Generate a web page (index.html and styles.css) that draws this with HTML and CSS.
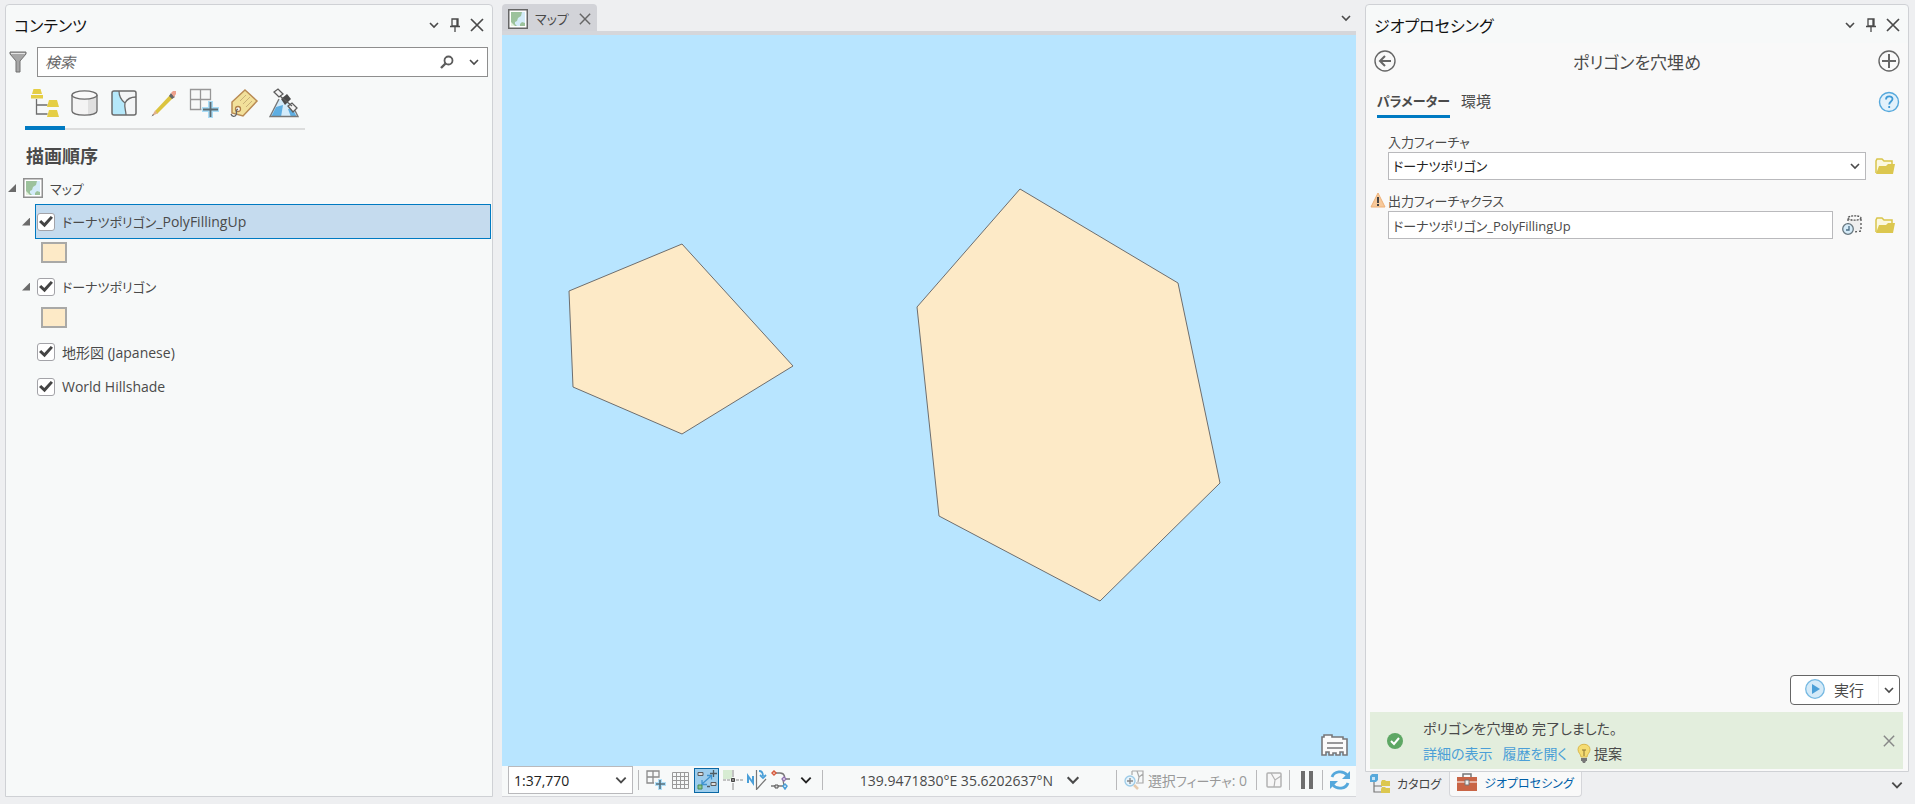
FILE: index.html
```html
<!DOCTYPE html>
<html lang="ja">

<head>
    <meta charset="UTF-8">
    <meta name="viewport" content="width=device-width, initial-scale=1.0">
    <title>マップ</title>
    <link rel="stylesheet" href="styles.css">
</head>

<body>
    <!-- shared icons -->
    <svg class="symbols" aria-hidden="true">
        <symbol id="chevron" viewBox="0 0 12 12">
            <path d="M2 4l4 4 4-4" fill="none" stroke="currentColor" stroke-width="1.600" />
        </symbol>
        <symbol id="pin" viewBox="0 0 12 14">
            <path d="M3 1h6v7H3zM1 8.500h10M6 8v6M8 1v7" fill="none" stroke="currentColor" stroke-width="1.300" />
        </symbol>
        <symbol id="close" viewBox="0 0 14 14">
            <path d="M1 1l12 12M13 1L1 13" fill="none" stroke="currentColor" stroke-width="1.700" />
        </symbol>
        <symbol id="map" viewBox="0 0 20 20">
            <path d="M.75.75h18.500v18.500H.75z" fill="#fff" stroke="currentColor" stroke-width="1.500" />
            <path d="M3 3h14v14H3z" fill="#d3ebf8" />
            <path d="M3 3h11l-1 4-3 2-1 3-2 1v2l2 2H3z" fill="#9cc29c" />
            <path d="M12 17v-2l2-2 3 1v3z" fill="#9cc29c" />
            <path d="M3 13l4 4H3z" fill="#e4f1dd" />
        </symbol>
        <symbol id="folder" viewBox="0 0 20 17">
            <path d="M1 15V3l1-2h5l2 2h8v3" fill="#fbf8e0" stroke="#d9c54b" stroke-width="1.500" />
            <path d="M4 8h7l2-2h7l-2 10H1z" fill="#dcc74f" />
        </symbol>
    </svg>

    <div class="app">
        <section class="panel contents">
            <header class="panel-header">
                <h2>コンテンツ</h2>
                <button aria-label="メニュー"><svg class="i12"><use href="#chevron" /></svg></button>
                <button aria-label="固定"><svg class="i14"><use href="#pin" /></svg></button>
                <button aria-label="閉じる"><svg class="i14"><use href="#close" /></svg></button>
            </header>

            <div class="search">
                <svg class="funnel" viewBox="0 0 18 22">
                    <path d="M1 1h16v2l-6 7v11H7V10L1 3z" fill="#a6a6a6" stroke="#707070" />
                    <path d="M2 2.500h14" stroke="#e4e4e4" />
                </svg>
                <div class="search-box">
                    <input type="text" placeholder="検索" aria-label="検索">
                    <button aria-label="検索する">
                        <svg class="i14" viewBox="0 0 14 14">
                            <circle cx="8.500" cy="5.500" r="4" fill="none" stroke="#5c5c5c" stroke-width="1.800" />
                            <path d="M5.500 8.500L1 13" stroke="#5c5c5c" stroke-width="2.400" />
                        </svg>
                    </button>
                    <button aria-label="検索オプション"><svg class="i12"><use href="#chevron" /></svg></button>
                </div>
            </div>

            <nav class="view-tabs">
                <button class="active" aria-label="描画順序">
                    <svg viewBox="0 0 30 30">
                        <path d="M7.500 11v15h11M7.500 17h11" fill="none" stroke="#6e6e6e" stroke-width="1.300" />
                        <path d="M4.500 1h7l1.500 5H3zM2 7h12v3.500H2z" fill="#e5ce45" />
                        <path d="M20 12h8l2 7H18zM20 22h8l2 7H18z" fill="#e5ce45" />
                    </svg>
                </button>
                <button aria-label="データ ソース">
                    <svg viewBox="0 0 30 30">
                        <path d="M3 7v16c0 5.500 25 5.500 25 0V7" fill="#f4f4f4" />
                        <path d="M19 11v16c5-.5 9-2 9-4V7c0 2-4 3.500-9 4z" fill="#e0e0e0" />
                        <path d="M3 7v16c0 5.500 25 5.500 25 0V7" fill="none" stroke="#6b6b6b" stroke-width="1.300" />
                        <ellipse cx="15.500" cy="7" rx="12.500" ry="4.200" fill="#f9f9f9" stroke="#6b6b6b" stroke-width="1.300" />
                    </svg>
                </button>
                <button aria-label="選択">
                    <svg viewBox="0 0 30 30">
                        <rect x="3" y="3" width="24" height="24" rx="2" fill="#f3f5f6" />
                        <path d="M10 3c0 6 2 9 6 12-1 4 1 8 1 12H5l-2-2V3z" fill="#b5e8fa" />
                        <path d="M10 3c0 6 2 9 6 12-1 4 1 8 1 12M16 15c2-4 6-6 11-6" fill="none" stroke="#6b6b6b" stroke-width="1.300" />
                        <rect x="3" y="3" width="24" height="24" rx="2" fill="none" stroke="#6b6b6b" stroke-width="1.500" />
                    </svg>
                </button>
                <button aria-label="編集">
                    <svg viewBox="0 0 30 30">
                        <path d="M6 23L21 7l3 3L8 26z" fill="#dcc43f" />
                        <path d="M6 22.500L3 28l5.500-2.500z" fill="#e0b08b" />
                        <path d="M4 26l-1.500 2.500L5 27z" fill="#666" />
                        <path d="M20 8l2-3 4 4-3 2z" fill="#686868" />
                        <path d="M22 5l2-2h3v3l-2 3z" fill="#eea08d" />
                    </svg>
                </button>
                <button aria-label="スナップ">
                    <svg viewBox="0 0 30 30">
                        <path d="M1.500 1.500h20v10h-20zM11.500 1.500v20M1.500 11.500v10h11" fill="none" stroke="#979797" stroke-width="1.300" />
                        <path d="M19 13h5v6h6v5h-6v6h-5v-6h-6v-5h6z" fill="#a9dcf6" />
                        <path d="M21.500 14v15M14 21.500h15" stroke="#5d6a70" stroke-width="1.800" />
                    </svg>
                </button>
                <button aria-label="ラベリング">
                    <svg viewBox="0 0 30 30">
                        <path d="M16 2l12 11-14 15-11-3V14z" fill="#f2e09a" stroke="#b98b54" stroke-width="1.500" />
                        <path d="M11 13l6-6M14 16l7-7M17 19l6-6" stroke="#c9b078" />
                        <circle cx="9" cy="21" r="2.500" fill="#fff" stroke="#b07f48" stroke-width="1.300" />
                        <path d="M9 21c-4 2 0 4-2 6-1 2-4 2-5-1" fill="none" stroke="#666" stroke-width="1.300" />
                    </svg>
                </button>
                <button aria-label="画像">
                    <svg viewBox="0 0 30 30">
                        <path d="M9 12L1 29h28l-5-10-8-7z" fill="#d3ebfa" />
                        <path d="M7 19l7-2-2 12H2z" fill="#5eaee2" />
                        <path d="M23 20l5 9h-6l-3-8z" fill="#5eaee2" />
                        <path d="M10 11L1 28.500h28l-3-6" fill="none" stroke="#777" stroke-width="1.400" />
                        <path d="M5 4l4-3 5 5-4 3zM19 18l4-3 5 5-4 4z" fill="#f4f4f4" stroke="#5c5c5c" stroke-width="1.300" />
                        <path d="M12 11l6-5 4 5-6 6z" fill="#4b4b4b" />
                        <path d="M11 8l12 10" stroke="#5c5c5c" stroke-width="1.300" />
                    </svg>
                </button>
            </nav>

            <h3>描画順序</h3>

            <ul class="tree">
                <li class="map-row">
                    <span class="expander"></span>
                    <svg class="i20"><use href="#map" /></svg>
                    <span class="kana">マップ</span>
                </li>
                <li class="layer">
                    <span class="expander"></span>
                    <label class="selected"><input type="checkbox" checked><span><span class="kana">ドーナツポリゴン</span>_PolyFillingUp</span></label>
                </li>
                <li class="symbol"><span class="swatch"></span></li>
                <li class="layer">
                    <span class="expander"></span>
                    <label><input type="checkbox" checked><span class="kana">ドーナツポリゴン</span></label>
                </li>
                <li class="symbol"><span class="swatch"></span></li>
                <li class="layer leaf">
                    <label><input type="checkbox" checked><span>地形図 (Japanese)</span></label>
                </li>
                <li class="layer leaf">
                    <label><input type="checkbox" checked><span>World Hillshade</span></label>
                </li>
            </ul>
        </section>

        <main class="map-view">
            <div class="map-tabs">
                <div class="map-tab">
                    <svg class="i20"><use href="#map" /></svg>
                    <span class="kana">マップ</span>
                    <button aria-label="閉じる"><svg class="i12"><use href="#close" /></svg></button>
                </div>
                <button aria-label="ビュー一覧"><svg class="i12"><use href="#chevron" /></svg></button>
            </div>

            <div class="canvas">
                <svg class="features" viewBox="0 0 854 731">
                    <polygon points="180,209 291,331 180,399 71,352 67,256" />
                    <polygon points="518,154 676,248 718,448 598,566 437,481 415,272" />
                </svg>
                <button class="reader" aria-label="マップの注記">
                    <svg viewBox="0 0 28 24">
                        <path d="M1 22V4h2V2h8v2h11v2h4v16h-4v-3h-3v3h-4v-2h-3v2H8v-3H5v3z" fill="#fafafa" stroke="#77777a" stroke-width="1.600" />
                        <path d="M6 10h16M6 15h16" stroke="#77777a" stroke-width="1.600" />
                    </svg>
                </button>
            </div>

            <footer class="status">
                <div class="combo scale">
                    <select aria-label="縮尺">
                        <option>1:37,770</option>
                    </select>
                    <svg class="i14"><use href="#chevron" /></svg>
                </div>
                <i class="sep"></i>
                <button aria-label="グリッドの追加">
                    <svg class="i20" viewBox="0 0 20 20">
                        <path d="M1 1h12v6H1zM7 1v12M1 7v6h7" fill="none" stroke="#8b8b8b" stroke-width="1.300" />
                        <path d="M12 9h4v3h4v4h-4v4h-4v-4H9v-4h3z" fill="#b0dff7" />
                        <path d="M14 10v9M10 14h9" stroke="#56707d" stroke-width="1.600" />
                    </svg>
                </button>
                <button aria-label="グリッド">
                    <svg class="i20" viewBox="0 0 20 20">
                        <path d="M2.500 2.500h16v16h-16zM6.500 2v16M10.500 2v16M14.500 2v16M2 6.500h16M2 10.500h16M2 14.500h16" fill="none" stroke="#9a9a9a" />
                    </svg>
                </button>
                <button class="active" aria-label="補正">
                    <svg class="i20" viewBox="0 0 20 20">
                        <path d="M5 14L14 6M10 5.500h4.500v4M5 10v4.500h5" fill="none" stroke="#3f93cf" stroke-width="1.300" />
                        <path d="M1 2.500h5v3H1zM14 12.500h5v3h-5z" fill="#ddd" stroke="#5b5b5b" />
                        <path d="M16.500 0v7M13 3.500h7M10 16.500h3" stroke="#4e5b63" stroke-width="1.300" />
                        <path d="M1 15h4v4H1z" fill="#8cc48c" stroke="#478b55" />
                    </svg>
                </button>
                <button aria-label="スナップ">
                    <svg class="i20" viewBox="0 0 20 20">
                        <path d="M0 0h9v9H0z" fill="#d7ecd3" />
                        <path d="M10 0v7M10 13v7" stroke="#8b8b8b" />
                        <path d="M0 10h7M13 10h7" stroke="#8b8b8b" stroke-dasharray="3 1" />
                        <path d="M8.500 8.500h3v3h-3z" fill="#888" stroke="#444" />
                    </svg>
                </button>
                <button aria-label="真北">
                    <svg class="i20" viewBox="0 0 20 20">
                        <path d="M1 13V6l5 7V6" fill="none" stroke="#4a9fd8" stroke-width="2" />
                        <path d="M9.500 0v20M10 19L19 9" stroke="#777" stroke-width="1.200" />
                        <path d="M12 1c3 0 4 2 4 5M13 5l3 3 3-3" fill="none" stroke="#4a9fd8" stroke-width="1.800" />
                    </svg>
                </button>
                <button aria-label="頂点">
                    <svg class="i20" viewBox="0 0 20 20">
                        <path d="M3 3h6c5 0 6 6 3 6h7M0 16h13l-1-6" fill="none" stroke="#777" stroke-width="1.300" />
                        <path d="M3 1l2 2-2 2-2-2z" fill="#fff" stroke="#d85b3e" stroke-width="1.500" />
                        <path d="M13 7l2 2-2 2-2-2z" fill="#fff" stroke="#9070b0" stroke-width="1.300" />
                        <path d="M14 14l2 2-2 3-2-3z" fill="#fff" stroke="#4a9fd8" stroke-width="1.500" />
                        <path d="M4 15h3v3H4z" fill="#ddd" stroke="#555" />
                    </svg>
                </button>
                <button class="dark" aria-label="その他"><svg class="i14"><use href="#chevron" /></svg></button>
                <i class="sep"></i>
                <button class="coords"><span>139.9471830°E 35.6202637°N</span><svg class="i16"><use href="#chevron" /></svg></button>
                <i class="sep"></i>
                <button class="selection" disabled>
                    <svg class="i20" viewBox="0 0 20 20">
                        <path d="M8 1h11v12h-7M8 1v4M13 1l2 6 4-3M15 7l-1 5" fill="none" stroke="#a8a8a8" stroke-width="1.200" />
                        <circle cx="6" cy="11" r="5" fill="#e5f3fb" stroke="#9ccbe8" stroke-width="1.300" />
                        <path d="M6 8v6M3 11h6" stroke="#888" stroke-width="1.300" />
                        <path d="M10 15l4 4" stroke="#e6cbae" stroke-width="2.500" />
                    </svg>
                    <span>選択<span class="kana">フィーチャ</span>: 0</span>
                </button>
                <i class="sep"></i>
                <button disabled aria-label="選択解除">
                    <svg class="i20" viewBox="0 0 20 20">
                        <rect x="3" y="3" width="14" height="14" rx="1" fill="#f7f7f7" stroke="#b2b2b2" stroke-width="1.500" />
                        <path d="M7 3l4 7 6-4M11 10l-1 7" fill="none" stroke="#b2b2b2" stroke-width="1.200" />
                    </svg>
                </button>
                <i class="sep"></i>
                <button aria-label="一時停止">
                    <svg class="i20" viewBox="0 0 20 20"><path d="M4 1h4v18H4zM12 1h4v18h-4z" fill="#6e6e6e" /></svg>
                </button>
                <i class="sep"></i>
                <button aria-label="更新">
                    <svg class="i20" viewBox="0 0 20 20">
                        <path d="M2 7c2-6 11-7 15-2M18 13c-2 6-11 7-15 2" fill="none" stroke="#55a8dc" stroke-width="2.800" />
                        <path d="M20 1v8h-8zM0 19v-8h8z" fill="#55a8dc" />
                    </svg>
                </button>
            </footer>
        </main>

        <div class="dock">
            <section class="panel tool">
                <header class="panel-header">
                    <h2>ジオプロセシング</h2>
                    <button aria-label="メニュー"><svg class="i12"><use href="#chevron" /></svg></button>
                    <button aria-label="固定"><svg class="i14"><use href="#pin" /></svg></button>
                    <button aria-label="閉じる"><svg class="i14"><use href="#close" /></svg></button>
                </header>

                <div class="tool-body">
                    <div class="tool-title">
                        <button aria-label="戻る">
                            <svg class="i22" viewBox="0 0 22 22">
                                <circle cx="11" cy="11" r="10" fill="none" stroke="#666" stroke-width="1.400" />
                                <path d="M17 11H6M11 6l-5 5 5 5" fill="none" stroke="#666" stroke-width="2" />
                            </svg>
                        </button>
                        <h1>ポリゴンを穴埋め</h1>
                        <button aria-label="追加">
                            <svg class="i22" viewBox="0 0 22 22">
                                <circle cx="11" cy="11" r="10" fill="none" stroke="#666" stroke-width="1.400" />
                                <path d="M11 4v14M4 11h14" stroke="#666" stroke-width="2" />
                            </svg>
                        </button>
                    </div>

                    <div class="tool-tabs">
                        <button class="active">パラメーター</button>
                        <button>環境</button>
                        <a href="#help" class="help" aria-label="ヘルプ">
                            <svg class="i22" viewBox="0 0 22 22">
                                <circle cx="11" cy="11" r="9.500" fill="#e2f1fb" stroke="#55a8dc" stroke-width="1.400" />
                                <path d="M8 8.500c0-4 6.500-4 6.500-.5 0 2.500-3.300 2.500-3.300 5.500M11.200 15v2" fill="none" stroke="#3f9ad6" stroke-width="1.800" />
                            </svg>
                        </a>
                    </div>

                    <div class="params">
                        <label for="input-features" class="kana"><span>入力フィーチャ</span></label>
                        <div class="param-row">
                            <div class="combo">
                                <select id="input-features" class="kana">
                                    <option>ドーナツポリゴン</option>
                                </select>
                                <svg class="i12"><use href="#chevron" /></svg>
                            </div>
                            <button aria-label="参照"><svg class="folder"><use href="#folder" /></svg></button>
                        </div>

                        <label for="output-class" class="kana">
                            <svg class="warning" viewBox="0 0 16 16">
                                <path d="M8 1l7 14H1z" fill="#f7c99b" stroke="#eeb077" />
                                <path d="M8 5v6M8 12v2" stroke="#444" stroke-width="2" />
                            </svg>
                            <span>出力フィーチャクラス</span>
                        </label>
                        <div class="param-row">
                            <input type="text" id="output-class" class="kana" value="ドーナツポリゴン_PolyFillingUp">
                            <button class="scratch" aria-label="一時データ">
                                <svg class="i20" viewBox="0 0 20 20">
                                    <path d="M6 3h13v13H6z" fill="#efefef" />
                                    <ellipse cx="12.500" cy="3" rx="6.500" ry="2.200" fill="#fafafa" stroke="#555" stroke-width="1.300" stroke-dasharray="2 1" />
                                    <path d="M19 4v12l-7 1M6 4v5" fill="none" stroke="#555" stroke-width="1.300" stroke-dasharray="2 2" />
                                    <circle cx="6" cy="14" r="5.300" fill="#d5ebf8" stroke="#68777f" stroke-width="1.300" />
                                    <path d="M7 11v4H4" fill="none" stroke="#4b6e84" stroke-width="1.300" />
                                </svg>
                            </button>
                            <button aria-label="参照"><svg class="folder"><use href="#folder" /></svg></button>
                        </div>
                    </div>

                    <div class="run">
                        <button class="run-main">
                            <svg class="i20" viewBox="0 0 20 20">
                                <circle cx="10" cy="10" r="9.300" fill="#d4eaf8" stroke="#76b9e2" stroke-width="1.300" />
                                <path d="M7 5l8 5-8 5z" fill="#4b9fd7" />
                            </svg>
                            <span>実行</span>
                        </button>
                        <button class="run-more" aria-label="実行オプション"><svg class="i12"><use href="#chevron" /></svg></button>
                    </div>

                    <div class="message">
                        <svg class="i16" viewBox="0 0 16 16">
                            <circle cx="8" cy="8" r="8" fill="#5ea764" />
                            <path d="M4 8l3 3 5-6" fill="none" stroke="#fff" stroke-width="2" />
                        </svg>
                        <div class="message-text">
                            <p>ポリゴンを穴埋め 完了しました。</p>
                            <p>
                                <a href="#details">詳細の表示</a>
                                <a href="#history">履歴を開く</a>
                                <span class="hint">
                                    <svg class="bulb" viewBox="0 0 14 20">
                                        <path d="M4 14c0-3-3-4-3-7.500 0-7 12-7 12 0C13 10 10 11 10 14z" fill="#f5dc72" stroke="#dab84c" />
                                        <path d="M5 7h4M7 7v6" stroke="#8a7434" />
                                        <path d="M4 15h6v3H9l-1 2H6l-1-2H4z" fill="#777" />
                                    </svg>提案</span>
                            </p>
                        </div>
                        <button aria-label="閉じる"><svg class="i12"><use href="#close" /></svg></button>
                    </div>
                </div>
            </section>

            <nav class="dock-tabs">
                <a href="#catalog">
                    <svg class="i20" viewBox="0 0 20 20">
                        <path d="M4 8v10h8M4 12h8" fill="none" stroke="#777" stroke-width="1.200" />
                        <path d="M0 2l2-2h6v6L6 8H0z" fill="#58a9db" />
                        <path d="M2 3h3v3H2z" fill="#c8e5f6" />
                        <path d="M11 8l1-2h3l1 1h4v5h-9zM11 15l1-2h3l1 1h4v5h-9z" fill="#dcc74f" />
                    </svg>
                    <span>カタログ</span>
                </a>
                <a href="#geoprocessing" class="active">
                    <svg class="i20" viewBox="0 0 20 20">
                        <path d="M6 4V1h8v3" fill="none" stroke="#777" stroke-width="1.500" />
                        <path d="M0 4h20v14H0z" fill="#c96546" />
                        <path d="M0 9h20" stroke="#fff" />
                        <path d="M8 7h4v5H8z" fill="#eee" stroke="#777" />
                    </svg>
                    <span>ジオプロセシング</span>
                </a>
                <button aria-label="ウィンドウ一覧"><svg class="i14"><use href="#chevron" /></svg></button>
            </nav>
        </div>
    </div>
</body>

</html>
```

FILE: styles.css
```css
* {
    box-sizing: border-box;
    margin: 0;
    padding: 0;
}

body {
    background: #eeeff1;
    color: #4a4a4a;
    font-family: "Open Sans", "Noto Sans CJK JP", sans-serif;
    font-size: 14px;
    font-feature-settings: "palt";
}

button,
input,
select {
    font: inherit;
    font-feature-settings: inherit;
    color: inherit;
    background: none;
    border: none;
    outline: none;
}

button {
    display: flex;
    align-items: center;
    justify-content: center;
}

a {
    color: #4b9fd7;
    text-decoration: none;
}

svg {
    flex: none;
    display: block;
}

.symbols {
    position: absolute;
    width: 0;
    height: 0;
}

.i12 { width: 12px; height: 12px; }
.i14 { width: 14px; height: 14px; }
.i16 { width: 16px; height: 16px; }
.i20 { width: 20px; height: 20px; }
.i22 { width: 22px; height: 22px; }

.kana {
    font-size: 13px;
}

.app {
    display: grid;
    grid-template-columns: 488fr 854fr 544fr;
    gap: 9px;
    height: 100vh;
    padding: 4px 6px 7px 5px;
}

.panel {
    background: #f7f9f9;
    border: 1px solid #cfd1d5;
    border-radius: 4px 4px 0 0;
    min-width: 0;
}

.panel-header {
    display: flex;
    align-items: center;
    gap: 8px;
    height: 38px;
    padding: 2px 8px 0;
}

.panel-header h2 {
    flex: 1;
    color: #111;
    font-size: 16px;
    font-weight: 400;
}

/* contents pane */

.search {
    display: flex;
    align-items: center;
    gap: 10px;
    margin-top: 4px;
    padding: 0 4px 0 3px;
}

.funnel {
    width: 18px;
    height: 22px;
}

.search-box {
    flex: 1;
    display: flex;
    align-items: center;
    gap: 14px;
    height: 30px;
    padding: 0 7px;
    background: #fff;
    border: 1px solid #8e8e8e;
}

.search-box input {
    flex: 1;
    font-size: 15px;
    font-style: italic;
}

.search-box input::placeholder {
    color: #666;
}

.view-tabs {
    display: flex;
    width: max-content;
    margin: 8px 0 0 19px;
    border-bottom: 2px solid #dcdddd;
}

.view-tabs button {
    width: 40px;
    height: 45px;
    padding: 0 2px 5px 0;
    margin-bottom: -2px;
    border-bottom: 4px solid transparent;
}

.view-tabs button.active {
    border-color: #007ac2;
}

.view-tabs svg {
    width: 30px;
    height: 30px;
}

.contents h3 {
    margin: 13px 0 0 20px;
    font-size: 18px;
    line-height: 26px;
}

.tree {
    list-style: none;
}

.tree li {
    display: flex;
    align-items: center;
}

.map-row {
    height: 35px;
    gap: 7px;
    padding: 3px 0 0 2px;
}

.expander {
    width: 8px;
    height: 8px;
    background: #6b6b6b;
    clip-path: polygon(100% 0, 100% 100%, 0 100%);
}

.map-row svg {
    color: #8f8f8f;
}

.layer {
    height: 35px;
    gap: 5px;
    padding: 0 1px 0 16px;
}

.layer.leaf {
    padding-left: 29px;
}

.layer label {
    flex: 1;
    display: flex;
    align-items: center;
    gap: 7px;
    height: 35px;
    padding-left: 1px;
    border: 1px solid transparent;
}

.layer label.selected {
    background: #c5dbee;
    border-color: #007ac2;
}

.layer input {
    appearance: none;
    display: grid;
    place-items: center;
    width: 18px;
    height: 18px;
    background: #fff;
    border: 1px solid #a3a3a8;
    border-radius: 3px;
}

.layer input:checked::before {
    content: "";
    width: 14px;
    height: 12px;
    background: #444;
    clip-path: polygon(0 54%, 16% 38%, 38% 62%, 84% 4%, 100% 18%, 40% 98%);
}

.symbol {
    height: 30px;
    padding: 0 0 4px 35px;
}

.swatch {
    width: 26px;
    height: 21px;
    background: #fdeac7;
    border: 2px solid #a9a9a7;
}

/* map view */

.map-view {
    display: flex;
    flex-direction: column;
    min-width: 0;
}

.map-tabs {
    display: flex;
    justify-content: space-between;
    height: 31px;
    padding-right: 4px;
    border-bottom: 4px solid #d5d6da;
}

.map-tab {
    display: flex;
    align-items: center;
    gap: 7px;
    padding: 2px 6px 0;
    background: #d2d3d8;
    border-radius: 4px 4px 0 0;
}

.map-tab button {
    margin-left: 3px;
    color: #5e5e5e;
}

.map-tab svg {
    color: #666;
}

.canvas {
    flex: 1;
    min-height: 0;
    position: relative;
    background: #b8e5ff;
}

.features {
    width: 100%;
    height: 100%;
}

.features polygon {
    fill: #fdeac7;
    stroke: #6e6e6e;
    stroke-width: 1;
}

/* floats over the map */
.reader {
    position: absolute;
    right: 7px;
    bottom: 9px;
}

.reader svg {
    width: 28px;
    height: 24px;
}

.combo {
    display: grid;
    align-items: center;
    background: #fff;
    border: 1px solid #b9b9bc;
}

.combo select,
.combo svg {
    grid-area: 1 / 1;
}

.combo select {
    appearance: none;
    width: 100%;
    color: #222;
}

.combo svg {
    justify-self: end;
    margin-right: 4px;
    pointer-events: none;
}

.status {
    display: flex;
    align-items: center;
    gap: 4px;
    height: 31px;
    padding: 0 6px 2px;
    background: #f7f9f9;
    border-bottom: 1px solid #d5d6da;
}

.scale {
    width: 125px;
    height: 28px;
}

.scale select {
    padding-left: 5px;
}

.status .active {
    width: 25px;
    height: 25px;
    background: #9dcdec;
    border: 1px solid #0a68a5;
}

.status .dark {
    margin: 0 4px;
    color: #222;
}

.sep {
    width: 1px;
    height: 20px;
    background: #b9b9bb;
    margin: 0 3px 0 1px;
}

.coords {
    flex: 1;
    gap: 12px;
    white-space: nowrap;
}

.selection {
    gap: 4px;
    margin-right: 4px;
    color: #999;
    white-space: nowrap;
}

/* geoprocessing pane */

.dock {
    display: flex;
    flex-direction: column;
    min-width: 0;
}

.tool {
    flex: 1;
    display: flex;
    flex-direction: column;
}

.tool-body {
    flex: 1;
    display: flex;
    flex-direction: column;
    padding: 0 5px 2px 4px;
    background: #f9f9f9;
}

.tool-title {
    display: flex;
    align-items: center;
    height: 38px;
    padding: 0 3px 2px 4px;
}

.tool-title h1 {
    flex: 1;
    font-size: 17px;
    font-weight: 400;
    text-align: center;
}

.tool-tabs {
    display: flex;
    align-items: center;
    gap: 11px;
    height: 44px;
    padding: 0 3px 2px 7px;
}

.tool-tabs button {
    height: 32px;
    font-size: 15px;
    border-bottom: 3px solid transparent;
}

.tool-tabs button.active {
    font-size: 13px;
    font-weight: 600;
    border-color: #007ac2;
}

.help {
    margin-left: auto;
}

.params {
    padding: 7px 8px 0 0;
}

.params label {
    display: flex;
    align-items: center;
    justify-content: flex-start;
    gap: 2px;
    height: 20px;
    padding-bottom: 2px;
}

.params label span:first-child {
    margin-left: 18px;
}

.warning {
    width: 16px;
    height: 16px;
}

.param-row {
    display: flex;
    align-items: center;
    gap: 8px;
    height: 28px;
    margin: 0 0 11px 18px;
}

.param-row .combo,
.param-row input {
    flex: 1;
    min-width: 0;
    height: 28px;
    border: 1px solid #b9b9bc;
}

.param-row select,
.param-row input {
    padding-left: 4px;
}

.param-row input {
    background: #fff;
}

.param-row button {
    min-width: 21px;
}

.param-row .scratch {
    margin-right: 4px;
}

.folder {
    width: 20px;
    height: 17px;
}

.run {
    display: flex;
    width: 110px;
    height: 30px;
    margin: auto 3px 7px auto;
    background: #fff;
    border: 1px solid #666;
    border-radius: 4px;
}

.run-main {
    flex: 1;
    gap: 9px;
    padding-bottom: 2px;
    font-size: 15px;
}

.run-more {
    width: 21px;
    border-left: 1px solid #eee;
}

.message {
    display: flex;
    align-items: center;
    gap: 20px;
    height: 57px;
    padding: 0 8px 0 17px;
    background: #e3eedd;
}

.message-text {
    flex: 1;
    line-height: 25px;
}

.message-text p {
    display: flex;
    gap: 10px;
}

.message button {
    color: #888;
}

.hint {
    display: flex;
    align-items: center;
    gap: 3px;
}

.bulb {
    width: 14px;
    height: 20px;
}

.dock-tabs {
    display: flex;
    height: 25px;
    padding: 0 5px;
}

.dock-tabs a {
    display: flex;
    align-items: center;
    gap: 7px;
    padding: 0 8px 2px 0;
    color: #444;
    font-size: 12px;
}

.dock-tabs a.active {
    padding: 0 7px 2px;
    color: #005fa8;
    background: #f9f9f9;
    border: 1px solid #d5d6da;
    border-top: none;
    border-radius: 0 0 4px 4px;
}

.dock-tabs button {
    margin-left: auto;
}
```
